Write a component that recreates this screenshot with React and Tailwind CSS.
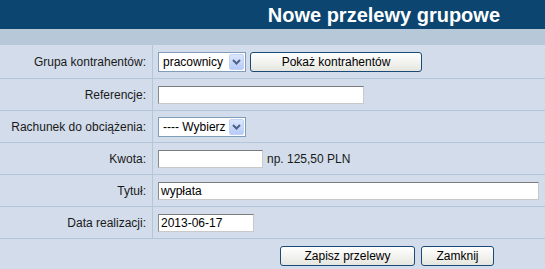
const font = { fontFamily: '"Liberation Sans", Arial, sans-serif' };

function Select({ value }) {
    return (
        <div className="flex h-[20px] w-[88px] items-center border border-[#7f9db9] bg-white pl-[4px] pr-[1px]">
            <span className="flex-1 text-[12px] leading-none text-black">{value}</span>
            <span className="flex h-[16px] w-[15px] items-center justify-center rounded-[2px] border border-[#c3d3f7] bg-gradient-to-b from-[#dce6fd] to-[#b7cbf8]">
                <svg width="9" height="6" viewBox="0 0 9 6">
                    <path d="M1 1 L4.5 4.5 L8 1" fill="none" stroke="#4d6185" strokeWidth="2" />
                </svg>
            </span>
        </div>
    );
}

function Input({ width, value = '' }) {
    return (
        <div className={`flex h-[18px] items-center border border-[#c9c9c9] border-t-[#7c7c7c] border-l-[#8a8a8a] bg-white pl-[2px] text-[12px] leading-none text-black ${width}`}>
            {value}
        </div>
    );
}

function Button({ width, children }) {
    return (
        <button className={`flex h-[20px] items-center justify-center rounded-[3px] border border-[#1c4a78] bg-gradient-to-b from-white to-[#e6e6e0] text-[12px] leading-none text-black ${width}`}>
            {children}
        </button>
    );
}

function Row({ label, height = 'h-[32px]', children }) {
    return (
        <div className={`flex border-b border-[#b5c6d9] ${height}`}>
            <div className="flex w-[153px] items-center justify-end border-r border-[#b5c6d9] pr-[6px] text-[12px] text-[#1a1a1a]">{label}</div>
            <div className="flex flex-1 items-center gap-[4px] pl-[5px]">{children}</div>
        </div>
    );
}

export default function App() {
    return (
        <div className="h-[269px] w-[545px] overflow-hidden bg-[#d2dcea]" style={font}>
            <div className="flex h-[29px] items-center justify-end bg-[#0b4570] pr-[45px] text-[20px] font-bold text-white">Nowe przelewy grupowe</div>
            <div className="h-[16px] bg-[#b7c8d8]"></div>
            <Row label="Grupa kontrahentów:" height="h-[34px]">
                <Select value="pracownicy" />
                <Button width="w-[172px] h-[19px]">Pokaż kontrahentów</Button>
            </Row>
            <Row label="Referencje:">
                <Input width="w-[206px]" />
            </Row>
            <Row label="Rachunek do obciążenia:">
                <Select value="---- Wybierz" />
            </Row>
            <Row label="Kwota:">
                <Input width="w-[105px]" />
                <span className="text-[12px] text-[#1a1a1a]">np. 125,50 PLN</span>
            </Row>
            <Row label="Tytuł:">
                <Input width="w-[381px]" value="wypłata" />
            </Row>
            <Row label="Data realizacji:">
                <Input width="w-[96px]" value="2013-06-17" />
            </Row>
            <div className="flex gap-[6px] pl-[280px] pt-[7px]">
                <Button width="w-[135px]">Zapisz przelewy</Button>
                <Button width="w-[73px]">Zamknij</Button>
            </div>
        </div>
    );
}
